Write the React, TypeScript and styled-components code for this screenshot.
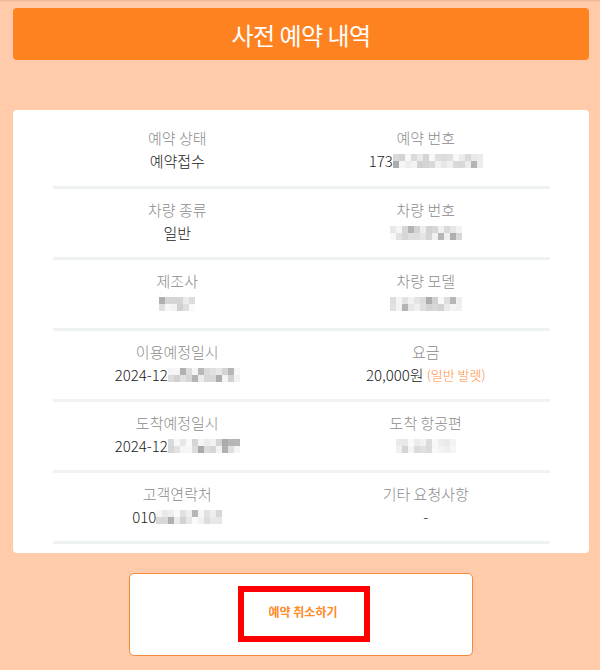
import React from 'react'
import styled, { createGlobalStyle } from 'styled-components'

const GlobalStyle = createGlobalStyle`
    html, body {
        margin: 0;
        padding: 0;
        background: #ffcbab;
        font-family: 'Noto Sans CJK KR', 'Noto Sans', sans-serif;
    }
`

const Page = styled.div`
    min-height: 670px;
    box-sizing: border-box;
    padding: 8px 11px 0 13px;
    box-shadow: inset 0 3px 2px -2px rgba(150, 80, 40, 0.18);
    display: flex;
    flex-direction: column;
    align-items: stretch;
`

const Header = styled.h1`
    margin: 0;
    height: 52px;
    border-radius: 4px;
    background: #ff8221;
    color: #fff;
    font-size: 24px;
    font-weight: 400;
    letter-spacing: -0.5px;
    display: flex;
    align-items: center;
    justify-content: center;
`

const Card = styled.div`
    margin-top: 50px;
    background: #fff;
    border-radius: 4px;
    padding: 16px 39px 9px 40px;
`

const Row = styled.div`
    display: grid;
    grid-template-columns: 1fr 1fr;
    align-items: start;
    box-sizing: border-box;
    height: 71px;
    padding-top: 10px;
    border-bottom: 3px solid #eef3f0;
    &:first-child {
        padding-top: 1px;
        height: 63px;
    }
`

const Cell = styled.div`
    display: flex;
    flex-direction: column;
    align-items: center;
`

const Label = styled.div`
    height: 22px;
    font-size: 15px;
    line-height: 22px;
    color: #8c8c8c;
    font-weight: 300;
`

const Value = styled.div`
    height: 24px;
    font-size: 15px;
    line-height: 24px;
    color: #1a1a1a;
    font-weight: 300;
    display: flex;
    align-items: center;
`

const Note = styled.span`
    font-size: 13px;
    color: #ff8a3a;
    margin-left: 3px;
`

const BlurWrap = styled.span<{ $cols: number }>`
    display: inline-grid;
    grid-template-columns: repeat(${({ $cols }) => $cols}, 6px);
    grid-auto-rows: 7px;
`

const Pix = styled.span`
    display: block;
`

const ButtonArea = styled.div`
    margin-top: 20px;
    display: flex;
    justify-content: center;
`

const CancelButton = styled.button`
    position: relative;
    width: 344px;
    height: 83px;
    background: #fff;
    border: 1px solid #f58a3c;
    border-radius: 5px;
    color: #ff8a2a;
    font-family: inherit;
    font-size: 12px;
    font-weight: 700;
    cursor: pointer;
    padding: 0 0 6px 4px;
`

const Highlight = styled.span`
    position: absolute;
    left: 108px;
    top: 12px;
    width: 132px;
    height: 56px;
    box-sizing: border-box;
    border: 6px solid #ff0000;
    pointer-events: none;
`

const Blur = ({ width, seed }: { width: number; seed: number }) => {
    const cols = Math.round(width / 6)
    let s = seed
    const cells = Array.from({ length: cols * 2 }, () => {
        s = (s * 9301 + 49297) % 233280
        const r = s / 233280
        const g = Math.round(r < 0.15 ? 170 + r * 100 : 200 + r * 50)
        return `rgb(${g},${g},${g})`
    })
    return (
        <BlurWrap $cols={cols}>
            {cells.map((c, i) => (
                <Pix key={i} style={{ background: c }} />
            ))}
        </BlurWrap>
    )
}

const rows: [string, React.ReactNode, string, React.ReactNode][] = [
    ['예약 상태', '예약접수', '예약 번호', <>173<Blur width={92} seed={3} /></>],
    ['차량 종류', '일반', '차량 번호', <Blur width={72} seed={11} />],
    ['제조사', <Blur width={36} seed={21} />, '차량 모델', <Blur width={72} seed={5} />],
    [
        '이용예정일시',
        <>2024-12<Blur width={72} seed={17} /></>,
        '요금',
        <>20,000원<Note>(일반 발렛)</Note></>,
    ],
    ['도착예정일시', <>2024-12<Blur width={72} seed={29} /></>, '도착 항공편', <Blur width={60} seed={37} />],
    ['고객연락처', <>010<Blur width={66} seed={43} /></>, '기타 요청사항', '-'],
]

export default function App() {
    return (
        <>
            <GlobalStyle />
            <Page>
                <Header>사전 예약 내역</Header>
                <Card>
                    {rows.map(([l1, v1, l2, v2]) => (
                        <Row key={l1}>
                            <Cell>
                                <Label>{l1}</Label>
                                <Value>{v1}</Value>
                            </Cell>
                            <Cell>
                                <Label>{l2}</Label>
                                <Value>{v2}</Value>
                            </Cell>
                        </Row>
                    ))}
                </Card>
                <ButtonArea>
                    <CancelButton>
                        예약 취소하기
                        <Highlight />
                    </CancelButton>
                </ButtonArea>
            </Page>
        </>
    )
}
